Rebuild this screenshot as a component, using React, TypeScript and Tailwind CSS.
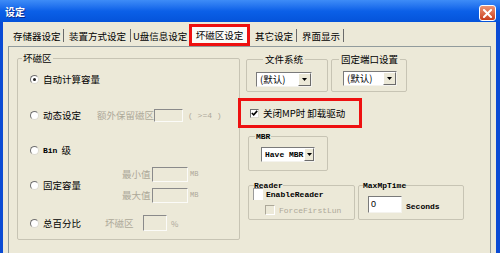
import React from 'react';

const cjk = "font-['Noto_Sans_CJK_SC',sans-serif] text-[9.5px] leading-[11px]";
const mono = "font-['Liberation_Mono',monospace] text-[8px] leading-[9px] font-bold";

const Radio = ({ checked = false }: { checked?: boolean }) => (
  <span className="w-[9px] h-[9px] shrink-0 rounded-full bg-white border border-t-[#6f6f6f] border-l-[#6f6f6f] border-r-[#dcdad0] border-b-[#dcdad0] flex items-center justify-center">
    {checked && <span className="w-[3px] h-[3px] rounded-full bg-[#1e1e1e]" />}
  </span>
);

const Sunken = ({ className = '' }: { className?: string }) => (
  <span className={`block border border-t-[#8a8a8a] border-l-[#8a8a8a] border-r-[#fbfbf8] border-b-[#fbfbf8] bg-[#ece9d8] ${className}`} />
);

const Arrow = () => (
  <svg width="5" height="3" viewBox="0 0 5 3">
    <path d="M0 0H5L2.5 3Z" fill="#000" />
  </svg>
);

interface ComboProps {
  text: string;
  className?: string;
  btn?: string;
  latin?: boolean;
}

const Combo: React.FC<ComboProps> = ({ text, className = '', btn = 'w-[13px]', latin = false }) => (
  <div className={`flex h-[15px] bg-white border border-t-[#7a7a7a] border-l-[#7a7a7a] border-r-[#f4f3ee] border-b-[#f4f3ee] ${className}`}>
    <span className={`flex-1 flex items-center pl-[3px] text-black ${latin ? mono : cjk}`}>{text}</span>
    <span className={`${btn} bg-[#ece9d8] border border-t-white border-l-white border-r-[#6b6b6b] border-b-[#6b6b6b] flex items-center justify-center`}>
      <Arrow />
    </span>
  </div>
);

const Sep = () => <span className="w-[1px] h-[13px] bg-[#6a6a6a] self-center mt-[2px]" />;

export default function App() {
  return (
    <div className="w-[500px] h-[253px] overflow-hidden flex flex-col bg-[#0a4bd4] text-black">
      {/* title bar */}
      <div className="h-[22px] shrink-0 flex items-start bg-linear-to-b from-[#3e8cf7] via-[#0b60e8] to-[#0553da]">
        <span className="ml-[5px] mt-[6px] font-['Noto_Sans_CJK_SC',sans-serif] text-[10px] leading-[11px] font-bold text-white [text-shadow:1px_1px_0_#0a2a8a]">
          设定
        </span>
        <span className="ml-auto mt-[5px] mr-[4px] w-[17px] h-[16px] rounded-[3px] border border-white bg-linear-to-b from-[#ec9474] to-[#c83a18] flex items-center justify-center">
          <svg width="9" height="9" viewBox="0 0 9 9">
            <path d="M1 1L8 8M8 1L1 8" stroke="#fff" strokeWidth="2" strokeLinecap="square" />
          </svg>
        </span>
      </div>

      <div className="flex-1 flex flex-col ml-[3px] mr-[4px] bg-[#ece9d8]">
        {/* tabs */}
        <div className={`h-[24px] shrink-0 flex items-end pl-[6px] ${cjk}`}>
          <div className="w-[54px] h-[22px] pl-[4px] pt-[2px] flex items-center">存储器设定</div>
          <Sep />
          <div className="w-[66px] h-[22px] pl-[5px] pt-[2px] flex items-center">装置方式设定</div>
          <Sep />
          <div className="w-[58px] h-[22px] pl-[2px] pt-[2px] flex items-center">U盘信息设定</div>
          <div className="w-[61px] h-[22px] border-[3px] border-[#ee1010] bg-[#fbfbf8] flex items-center justify-center pt-[1px]">坏磁区设定</div>
          <div className="w-[46px] h-[22px] pl-[5px] pt-[2px] flex items-center">其它设定</div>
          <Sep />
          <div className="w-[46px] h-[22px] pl-[5px] pt-[2px] flex items-center">界面显示</div>
          <Sep />
        </div>

        {/* panel */}
        <div className="flex-1 mx-[5px] border-t border-l border-r border-[#919b9c] flex pt-[6px] pl-[8px]">
          {/* bad block group */}
          <fieldset className="w-[223px] h-[187px] shrink-0 border border-[#c7c4b4] rounded-[2px]">
            <legend className={`ml-[4px] px-[1px] ${cjk} leading-[9px]`}>坏磁区</legend>
            <div className={`flex flex-col pl-[12px] ${cjk}`}>
              <div className="mt-[8px] h-[14px] flex items-center gap-[4px]">
                <Radio checked />
                <span>自动计算容量</span>
              </div>

              <div className="mt-[22px] h-[14px] flex items-center">
                <div className="w-[67px] flex items-center gap-[4px]">
                  <Radio />
                  <span>动态设定</span>
                </div>
                <span className="w-[57px] text-[#aca899]">额外保留磁区</span>
                <Sunken className="w-[29px] h-[13px]" />
                <span className="ml-[5px] font-['Liberation_Mono',monospace] text-[8px] text-[#aca899]">( &gt;=4 )</span>
              </div>

              <div className="mt-[21px] h-[14px] flex items-center gap-[4px]">
                <Radio />
                <span className="font-['Liberation_Mono',monospace] text-[8px] font-bold">Bin</span>
                <span>级</span>
              </div>

              <div className="mt-[10px] h-[36px] flex items-center">
                <div className="w-[67px] flex items-center gap-[4px]">
                  <Radio />
                  <span>固定容量</span>
                </div>
                <div className="ml-[25px] flex flex-col gap-[6px] text-[#aca899]">
                  <div className="h-[15px] flex items-center">
                    <span className="w-[30px]">最小值</span>
                    <Sunken className="w-[36px] h-[15px]" />
                    <span className="ml-[2px] font-['Liberation_Mono',monospace] text-[7px]">MB</span>
                  </div>
                  <div className="h-[15px] flex items-center">
                    <span className="w-[30px]">最大值</span>
                    <Sunken className="w-[36px] h-[15px]" />
                    <span className="ml-[2px] font-['Liberation_Mono',monospace] text-[7px]">MB</span>
                  </div>
                </div>
              </div>

              <div className="mt-[12px] h-[16px] flex items-center">
                <div className="w-[67px] flex items-center gap-[4px]">
                  <Radio />
                  <span>总百分比</span>
                </div>
                <span className="ml-[8px] w-[38px] text-[#aca899]">坏磁区</span>
                <Sunken className="w-[24px] h-[16px]" />
                <span className="ml-[4px] text-[8px] text-[#aca899]">%</span>
              </div>
            </div>
          </fieldset>

          {/* right column */}
          <div className="ml-[6px] flex flex-col">
            <div className="mt-[1px] flex">
              <fieldset className="w-[82px] h-[38px] border border-[#c7c4b4] rounded-[2px]">
                <legend className={`ml-[16px] px-[2px] ${cjk} leading-[9px]`}>文件系统</legend>
                <Combo text="(默认)" className="ml-[9px] mt-[7px] w-[56px]" />
              </fieldset>
              <fieldset className="ml-[3px] w-[76px] h-[38px] border border-[#c7c4b4] rounded-[2px]">
                <legend className={`ml-[7px] px-[2px] ${cjk} leading-[9px]`}>固定端口设置</legend>
                <Combo text="(默认)" className="ml-[11px] mt-[6px] w-[54px]" />
              </fieldset>
            </div>

            <div className={`-ml-[8px] mt-[6px] w-[124px] h-[30px] border-[3px] border-[#ee1010] flex items-center pl-[9px] gap-[4px] ${cjk}`}>
              <span className="w-[9px] h-[9px] bg-white border border-t-[#6f6f6f] border-l-[#6f6f6f] border-r-[#dcdad0] border-b-[#dcdad0] flex items-center justify-center">
                <svg width="7" height="6" viewBox="0 0 7 6">
                  <path d="M0.8 3L2.7 4.8L6.2 0.9" stroke="#000" strokeWidth="1.6" fill="none" />
                </svg>
              </span>
              <span>关闭MP时 卸载驱动</span>
            </div>

            <fieldset className="ml-[2px] mt-[4px] w-[80px] h-[39px] border border-[#c7c4b4] rounded-[2px]">
              <legend className={`ml-[6px] px-[1px] ${mono}`}>MBR</legend>
              <Combo text="Have MBR" latin btn="w-[10px]" className="ml-[12px] mt-[6px] w-[54px]" />
            </fieldset>

            <div className="ml-[2px] mt-[10px] flex">
              <fieldset className="w-[107px] h-[39px] border border-[#c7c4b4] rounded-[2px]">
                <legend className={`ml-[5px] ${mono}`}>Reader</legend>
                <div className="-mt-[2px] ml-[4px] h-[12px] flex items-center gap-[3px]">
                  <span className="w-[10px] h-[12px] bg-white border-t border-l border-[#9a9a9a]" />
                  <span className={mono}>EnableReader</span>
                </div>
                <div className="mt-[5px] ml-[16px] h-[10px] flex items-center gap-[4px]">
                  <span className="w-[10px] h-[10px] border border-t-[#aca899] border-l-[#aca899] border-r-white border-b-white" />
                  <span className="font-['Liberation_Mono',monospace] text-[8px] leading-[9px] text-[#aca899]">ForceFirstLun</span>
                </div>
              </fieldset>
              <fieldset className="ml-[3px] w-[106px] h-[39px] border border-[#c7c4b4] rounded-[2px]">
                <legend className={`ml-[4px] ${mono}`}>MaxMpTime</legend>
                <div className="mt-[6px] ml-[9px] flex items-start">
                  <span className="w-[34px] h-[17px] bg-white border border-t-[#7a7a7a] border-l-[#7a7a7a] border-r-[#f4f3ee] border-b-[#f4f3ee] pl-[2px] font-['Liberation_Sans',sans-serif] text-[9px] leading-[14px]">
                    0
                  </span>
                  <span className={`ml-[4px] mt-[6px] ${mono}`}>Seconds</span>
                </div>
              </fieldset>
            </div>
          </div>
        </div>
      </div>
    </div>
  );
}
